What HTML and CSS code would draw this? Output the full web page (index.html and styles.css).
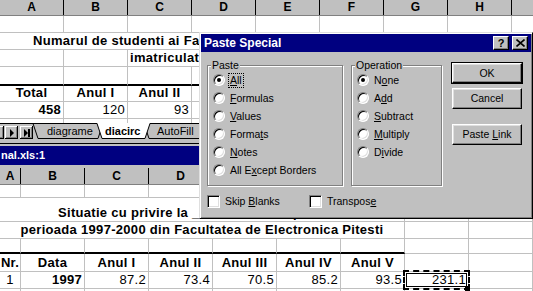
FILE: index.html
```html
<!DOCTYPE html>
<html lang="ro">
  <head>
    <meta charset="UTF-8" />
    <title>Paste Special</title>
    <link rel="stylesheet" href="styles.css">
  </head>
  <body>
    <div class="sheet">
      <div class="colhead">
        <div class="h">A</div><div class="h">B</div><div class="h">C</div><div class="h">D</div><div class="h">E</div><div class="h">F</div><div class="h">G</div><div class="h">H</div><div class="h"></div>
      </div>
      <div class="row h17">
        <div class="c"></div><div class="c"></div><div class="c"></div><div class="c"></div><div class="c"></div><div class="c"></div><div class="c"></div><div class="c"></div><div class="c"></div>
      </div>
      <div class="row h17">
        <div class="c b full" style="padding-left: 33px;">Numarul de studenti ai Facultatii de Electronica Pitesti</div>
      </div>
      <div class="row h17">
        <div class="c"></div><div class="c"></div>
        <div class="c b rest">imatriculati in anul universitar 1999-2000</div>
      </div>
      <div class="row h19 thick">
        <div class="c"></div><div class="c"></div><div class="c"></div><div class="c"></div><div class="c"></div><div class="c"></div><div class="c"></div><div class="c"></div><div class="c"></div>
      </div>
      <div class="row h16">
        <div class="c b mid">Total</div><div class="c b mid">Anul I</div><div class="c b mid">Anul II</div><div class="c b mid">Anul III</div><div class="c b mid">Anul IV</div><div class="c b mid">Anul V</div><div class="c"></div><div class="c"></div><div class="c"></div>
      </div>
      <div class="row h17">
        <div class="c b num">458</div><div class="c num">120</div><div class="c num">93</div><div class="c num">85</div><div class="c num">78</div><div class="c num">82</div><div class="c"></div><div class="c"></div><div class="c"></div>
      </div>
      <div class="row h4 cut">
        <div class="c"></div><div class="c"></div><div class="c"></div><div class="c"></div><div class="c"></div><div class="c"></div><div class="c"></div><div class="c"></div><div class="c"></div>
      </div>
      <svg class="tabs" width="533" height="17" viewBox="0 0 533 17">
        <rect width="533" height="17" fill="#c0c0c0"/>
        <line x1="0" y1="0.5" x2="533" y2="0.5" stroke="#000"/>
        <!-- scroll buttons -->
        <rect x="-9" y="3" width="13" height="13" fill="#000"/>
        <rect x="-9" y="3" width="12" height="12" fill="#fff"/>
        <rect x="-8" y="4" width="11" height="11" fill="#808080"/>
        <rect x="-8" y="4" width="10" height="10" fill="#c0c0c0"/>
        <rect x="5" y="3" width="13" height="13" fill="#000"/>
        <rect x="5" y="3" width="12" height="12" fill="#fff"/>
        <rect x="6" y="4" width="11" height="11" fill="#808080"/>
        <rect x="6" y="4" width="10" height="10" fill="#c0c0c0"/>
        <polygon points="10,6 10,14 14,10" fill="#000"/>
        <rect x="20" y="3" width="13" height="13" fill="#000"/>
        <rect x="20" y="3" width="12" height="12" fill="#fff"/>
        <rect x="21" y="4" width="11" height="11" fill="#808080"/>
        <rect x="21" y="4" width="10" height="10" fill="#c0c0c0"/>
        <polygon points="24,6 24,14 28,10" fill="#000"/>
        <rect x="28" y="6" width="2" height="8" fill="#000"/>
        <!-- sheet tabs -->
        <polygon points="144,0.5 262,0.5 257,15.5 149,15.5" fill="#c0c0c0" stroke="#000"/>
        <polygon points="33,0.5 103,0.5 98,15.5 38,15.5" fill="#c0c0c0" stroke="#000"/>
        <polygon points="97,0 150,0 145,15.5 102,15.5" fill="#fff"/>
        <polyline points="97,0.5 102,15.5 145,15.5 150,0.5" fill="none" stroke="#000"/>
        <text x="47" y="12">diagrame</text>
        <text x="105" y="12" class="active">diacirc</text>
        <text x="157" y="12">AutoFill</text>
      </svg>
    </div>

    <div class="split"></div>
    <div class="wtitle">nal.xls:1</div>

    <div class="sheet second">
      <div class="colhead tall">
        <div class="h a">A</div><div class="h">B</div><div class="h">C</div><div class="h">D</div><div class="h">E</div><div class="h">F</div><div class="h">G</div><div class="h">H</div><div class="h">I</div>
      </div>
      <div class="row h13">
        <div class="c a"></div><div class="c"></div><div class="c"></div><div class="c"></div><div class="c"></div><div class="c"></div><div class="c"></div><div class="c"></div><div class="c"></div>
      </div>
      <div class="row h24">
        <div class="c b merged" style="padding-left: 58px;">Situatie cu privire la ___ studentilor pe ani de studiu in</div>
        <div class="c"></div><div class="c"></div>
      </div>
      <div class="row h17">
        <div class="c b merged mid">perioada 1997-2000 din Facultatea de Electronica Pitesti</div>
        <div class="c"></div><div class="c"></div>
      </div>
      <div class="row h15 thick">
        <div class="c a"></div><div class="c"></div><div class="c"></div><div class="c"></div><div class="c"></div><div class="c"></div><div class="c"></div><div class="c thin"></div><div class="c thin"></div>
      </div>
      <div class="row h18">
        <div class="c a b mid">Nr.</div><div class="c b mid">Data</div><div class="c b mid">Anul I</div><div class="c b mid">Anul II</div><div class="c b mid">Anul III</div><div class="c b mid">Anul IV</div><div class="c b mid">Anul V</div><div class="c"></div><div class="c"></div>
      </div>
      <div class="row h17">
        <div class="c a mid">1</div><div class="c b num">1997</div><div class="c num">87.2</div><div class="c num">73.4</div><div class="c num">70.5</div><div class="c num">85.2</div><div class="c num">93.5</div><div class="c num">231.1</div><div class="c"></div>
      </div>
      <div class="row h3 cut">
        <div class="c a"></div><div class="c"></div><div class="c"></div><div class="c"></div><div class="c"></div><div class="c"></div><div class="c"></div><div class="c"></div><div class="c"></div>
      </div>
    </div>

    <div class="marquee"></div>
    <div class="handle"></div>

    <div class="dialog">
      <div class="dtitle">
        <span class="dname">Paste Special</span>
        <div class="tbtn">?</div>
        <div class="tbtn">
          <svg width="9" height="8" viewBox="0 0 9 8"><path d="M0.5 0.5 L8.5 7.5 M8.5 0.5 L0.5 7.5" stroke="#000" stroke-width="1.6"/></svg>
        </div>
      </div>
      <div class="dbody">
        <div class="group paste">
          <span class="legend">Paste</span>
          <div class="opt"><i class="radio on"></i><span class="focus"><u>A</u>ll</span></div>
          <div class="opt"><i class="radio"></i><span><u>F</u>ormulas</span></div>
          <div class="opt"><i class="radio"></i><span><u>V</u>alues</span></div>
          <div class="opt"><i class="radio"></i><span>Forma<u>t</u>s</span></div>
          <div class="opt"><i class="radio"></i><span><u>N</u>otes</span></div>
          <div class="opt"><i class="radio"></i><span>All E<u>x</u>cept Borders</span></div>
        </div>
        <div class="group operation">
          <span class="legend">Operation</span>
          <div class="opt"><i class="radio on"></i><span>N<u>o</u>ne</span></div>
          <div class="opt"><i class="radio"></i><span>A<u>d</u>d</span></div>
          <div class="opt"><i class="radio"></i><span><u>S</u>ubtract</span></div>
          <div class="opt"><i class="radio"></i><span><u>M</u>ultiply</span></div>
          <div class="opt"><i class="radio"></i><span>D<u>i</u>vide</span></div>
        </div>
        <div class="btns">
          <div class="btn default">OK</div>
          <div class="btn">Cancel</div>
          <div class="btn link"><span>Paste <u>L</u>ink</span></div>
        </div>
      </div>
      <div class="checks">
        <div class="chk first"><i class="box"></i><span>Skip <u>B</u>lanks</span></div>
        <div class="chk"><i class="box"></i><span>Transpos<u>e</u></span></div>
      </div>
    </div>
  </body>
</html>
```

FILE: styles.css
```css
* {
  margin: 0;
  padding: 0;
  box-sizing: border-box;
}
body {
  font-family: "Liberation Sans", Arial, sans-serif;
  background-color: #c0c0c0;
  color: #000;
  width: 533px;
  height: 291px;
  overflow: hidden;
  position: relative;
}
.sheet {
  background-color: #fff;
  width: 533px;
  overflow: hidden;
}
.colhead {
  display: flex;
  height: 16px;
  background-color: #c0c0c0;
  border-bottom: 1px solid #808080;
}
.colhead.tall {
  height: 17px;
}
.h {
  flex: none;
  width: 64px;
  border-right: 1px solid #000;
  text-align: center;
  font-weight: bold;
  font-size: 12px;
  line-height: 15px;
}
.colhead.tall .h {
  line-height: 16px;
}
.h.a {
  width: 21px;
}
.row {
  display: flex;
}
.h3 { height: 3px; }
.h4 { height: 4px; }
.h13 { height: 13px; }
.h15 { height: 15px; }
.h16 { height: 16px; }
.h17 { height: 17px; }
.h18 { height: 18px; }
.h19 { height: 19px; }
.h24 { height: 24px; }
.c {
  flex: none;
  width: 64px;
  border-right: 1px solid #c0c0c0;
  border-bottom: 1px solid #c0c0c0;
  padding: 0 2px 1px;
  display: flex;
  align-items: flex-end;
  justify-content: flex-start;
  overflow: hidden;
  white-space: nowrap;
  font-size: 13px;
  line-height: 14px;
  letter-spacing: 0.3px;
}
.c.a {
  width: 21px;
  padding-left: 0;
  padding-right: 0;
}
.c.full {
  width: 533px;
  border-right: 0;
}
.c.rest {
  width: 405px;
}
.c.merged {
  width: 405px;
}
.thick .c {
  border-bottom: 2px solid #000;
}
.thick .c.thin {
  border-bottom: 1px solid #c0c0c0;
}
.cut .c {
  border-bottom: 0;
}
.b {
  font-weight: bold;
}
.num {
  justify-content: flex-end;
}
.mid {
  justify-content: center;
}
.tabs {
  display: block;
}
.tabs text {
  font-family: "Liberation Sans", Arial, sans-serif;
  font-size: 11px;
  fill: #000;
}
.tabs text.active {
  font-weight: bold;
}
.split {
  height: 4px;
  border-bottom: 1px solid #000;
}
.wtitle {
  margin-top: 2px;
  height: 19px;
  background-color: #000080;
  color: #fff;
  font-weight: bold;
  font-size: 11px;
  line-height: 19px;
  padding-left: 1px;
}
.sheet.second {
  margin-top: 3px;
}
.marquee {
  position: absolute;
  left: 403px;
  top: 270px;
  width: 67px;
  height: 20px;
  border: 2px dashed #000;
  box-shadow: inset 0 0 0 1px #fff, inset 0 0 0 2px #000;
}
.handle {
  position: absolute;
  left: 465px;
  top: 286px;
  width: 5px;
  height: 5px;
  background-color: #000;
}

/* dialog */
.dialog {
  position: absolute;
  left: 199px;
  top: 32px;
  width: 334px;
  height: 187px;
  background-color: #c0c0c0;
  border: 1px solid;
  border-color: #dfdfdf #000 #000 #dfdfdf;
  box-shadow: inset 1px 1px #fff, inset -1px -1px #808080;
  padding: 1px;
  font-size: 10.5px;
  line-height: 13px;
}
.dtitle {
  height: 18px;
  background-color: #000080;
  color: #fff;
  display: flex;
  align-items: center;
  padding: 0 3px 0 3px;
}
.dname {
  flex: 1;
  font-weight: bold;
  font-size: 12px;
}
.tbtn {
  width: 16px;
  height: 14px;
  background-color: #c0c0c0;
  border: 1px solid;
  border-color: #fff #000 #000 #fff;
  box-shadow: inset -1px -1px #808080;
  color: #000;
  display: flex;
  align-items: center;
  justify-content: center;
  font-size: 11px;
  font-weight: bold;
}
.tbtn + .tbtn {
  margin-left: 3px;
}
.tbtn svg {
  display: block;
}
.dbody {
  display: flex;
  align-items: flex-start;
  padding: 11px 0 0 6px;
}
.group {
  margin-top: 2px;
  height: 121px;
  border: 1px solid #808080;
  box-shadow: inset 1px 1px #fff, 1px 1px #fff;
  padding: 0 5px;
}
.group.paste {
  width: 136px;
}
.group.operation {
  width: 91px;
  margin-left: 8px;
}
.legend {
  display: block;
  width: max-content;
  margin: -7px 0 -1px -2px;
  padding: 0 1px;
  background-color: #c0c0c0;
}
.opt {
  display: flex;
  align-items: center;
  gap: 5px;
  height: 18px;
  white-space: nowrap;
}
.radio {
  flex: none;
  position: relative;
  width: 12px;
  height: 12px;
  border-radius: 50%;
  background-color: #fff;
  border: 1px solid;
  border-color: #808080 #fff #fff #808080;
  box-shadow: inset 1px 1px #000, inset -1px -1px #dfdfdf;
}
.radio.on::after {
  content: "";
  position: absolute;
  left: 3px;
  top: 3px;
  width: 4px;
  height: 4px;
  border-radius: 50%;
  background-color: #000;
}
.focus {
  border: 1px dotted #000;
  margin-left: -2px;
  padding: 0 1px;
}
.btns {
  margin-left: 10px;
  display: flex;
  flex-direction: column;
}
.btn {
  width: 70px;
  height: 21px;
  background-color: #c0c0c0;
  border: 1px solid;
  border-color: #fff #000 #000 #fff;
  box-shadow: inset -1px -1px #808080, inset 1px 1px #dfdfdf;
  display: flex;
  align-items: center;
  justify-content: center;
  white-space: nowrap;
}
.btn.default {
  height: 20px;
  outline: 1px solid #000;
}
.btn + .btn {
  margin-top: 5px;
}
.btn.link {
  margin-top: 15px;
}
.checks {
  display: flex;
  align-items: center;
  height: 13px;
  margin-top: 9px;
  padding-left: 6px;
}
.chk {
  display: flex;
  align-items: center;
  gap: 5px;
  white-space: nowrap;
}
.chk.first {
  width: 102px;
}
.box {
  flex: none;
  width: 13px;
  height: 13px;
  background-color: #fff;
  border: 1px solid;
  border-color: #808080 #fff #fff #808080;
  box-shadow: inset 1px 1px #000, inset -1px -1px #dfdfdf;
}
```
